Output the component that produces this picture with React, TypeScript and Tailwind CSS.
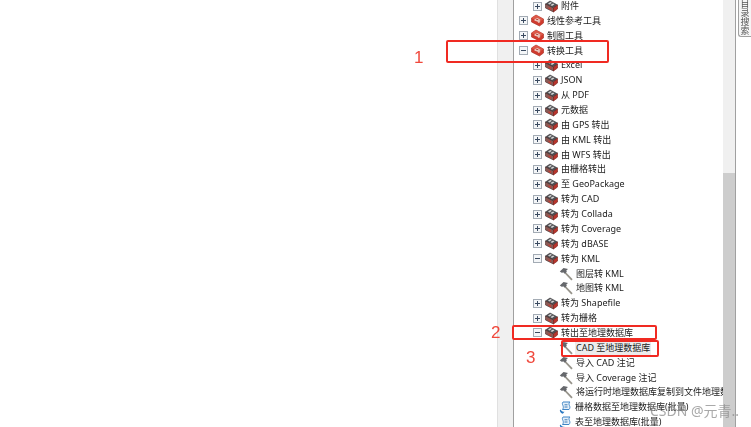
type Row = { label: string; level: 0 | 1 | 2; kind: "red" | "box" | "hammer" | "script"; toggle?: "plus" | "minus"; selected?: boolean };

const rows: Row[] = [
  { label: "附件", level: 1, kind: "box", toggle: "plus" },
  { label: "线性参考工具", level: 0, kind: "red", toggle: "plus" },
  { label: "制图工具", level: 0, kind: "red", toggle: "plus" },
  { label: "转换工具", level: 0, kind: "red", toggle: "minus" },
  { label: "Excel", level: 1, kind: "box", toggle: "plus" },
  { label: "JSON", level: 1, kind: "box", toggle: "plus" },
  { label: "从 PDF", level: 1, kind: "box", toggle: "plus" },
  { label: "元数据", level: 1, kind: "box", toggle: "plus" },
  { label: "由 GPS 转出", level: 1, kind: "box", toggle: "plus" },
  { label: "由 KML 转出", level: 1, kind: "box", toggle: "plus" },
  { label: "由 WFS 转出", level: 1, kind: "box", toggle: "plus" },
  { label: "由栅格转出", level: 1, kind: "box", toggle: "plus" },
  { label: "至 GeoPackage", level: 1, kind: "box", toggle: "plus" },
  { label: "转为 CAD", level: 1, kind: "box", toggle: "plus" },
  { label: "转为 Collada", level: 1, kind: "box", toggle: "plus" },
  { label: "转为 Coverage", level: 1, kind: "box", toggle: "plus" },
  { label: "转为 dBASE", level: 1, kind: "box", toggle: "plus" },
  { label: "转为 KML", level: 1, kind: "box", toggle: "minus" },
  { label: "图层转 KML", level: 2, kind: "hammer" },
  { label: "地图转 KML", level: 2, kind: "hammer" },
  { label: "转为 Shapefile", level: 1, kind: "box", toggle: "plus" },
  { label: "转为栅格", level: 1, kind: "box", toggle: "plus" },
  { label: "转出至地理数据库", level: 1, kind: "box", toggle: "minus" },
  { label: "CAD 至地理数据库", level: 2, kind: "hammer", selected: true },
  { label: "导入 CAD 注记", level: 2, kind: "hammer" },
  { label: "导入 Coverage 注记", level: 2, kind: "hammer" },
  { label: "将运行时地理数据库复制到文件地理数据库", level: 2, kind: "hammer" },
  { label: "栅格数据至地理数据库(批量)", level: 2, kind: "script" },
  { label: "表至地理数据库(批量)", level: 2, kind: "script" },
];

function Toggle({ type }: { type: "plus" | "minus" }) {
  return (
    <svg width="9" height="9" viewBox="0 0 9 9" className="shrink-0">
      <rect x="0.5" y="0.5" width="8" height="8" fill="#f4f6f8" stroke="#a3abb4" />
      <path d="M2 4.5h5" stroke="#3a4a60" />
      {type === "plus" && <path d="M4.5 2v5" stroke="#3a4a60" />}
    </svg>
  );
}

function Toolbox({ red }: { red: boolean }) {
  if (red) {
    return (
      <svg width="13" height="13" viewBox="0 0 13 13" className="block shrink-0">
        <path d="M.5 4 5 1l7.500 4v4L8.500 12 .5 8z" fill="#cf3a2d" stroke="#a32a20" strokeWidth="0.6" />
        <path d="M.5 4 5 1l7.500 4-4 3z" fill="#dc5a4a" />
        <path d="M3.500 5.200 6.500 4l3 1.800-1 1.200 1 1-2 1-1.200-1.500-2.800-.8z" fill="#e9c4bb" />
        <path d="M5.200 5.500h2" stroke="#b3362a" strokeWidth="0.9" />
      </svg>
    );
  }
  return (
    <svg width="13" height="13" viewBox="0 0 13 13" className="block shrink-0">
      <path d="M.5 4 5 1l7.500 4-4 3z" fill="#4f4f53" stroke="#38383b" strokeWidth="0.6" />
      <path d="M3 3.500 5.500 2l1.500.8L4.500 4.400zM5.500 5 8 3.500l1.500.8L7 5.900z" fill="#d2d2d2" />
      <path d="M.5 4l8 4v4l-8-4z" fill="#8a5a55" stroke="#4a2a28" strokeWidth="0.6" />
      <path d="M8.500 8l4-3v4l-4 3z" fill="#b9342c" stroke="#7a1e18" strokeWidth="0.6" />
      <path d="M3.500 7.200 6 8.500v1.600L3.500 8.800z" fill="#c83c32" />
    </svg>
  );
}

function Hammer() {
  return (
    <svg width="14" height="14" viewBox="0 0 14 14" className="block shrink-0">
      <path d="M5.500 5 13 12.800" stroke="#96938a" strokeWidth="1.800" />
      <path d="M.8 4.500 4.500 1 9 2 7.300 3.500 7.800 4.700 5.800 6.800 4.600 5.500 2.700 5.800z" fill="#66686c" />
    </svg>
  );
}

function ScriptIcon() {
  return (
    <svg width="13" height="13" viewBox="0 0 13 13" className="block shrink-0">
      <path d="M4 1h7c-1.200 1-1.200 2.200-.6 3.400.7 1.400.7 2.800-.4 4.100H3.500c1-1.300 1-2.700.4-4.100C3.300 3.200 3 2 4 1z" fill="#e4eff9" stroke="#3f85c6" strokeWidth="1" />
      <path d="M1.500 8.500c.8 1.800 2.200 2.300 4 2.300L3.800 12.800C2 12.500 1 11 .8 9.300z" fill="#2a79c2" />
      <path d="M5.500 3.800h3M5.500 6h3" stroke="#2f6fae" strokeWidth="0.9" />
    </svg>
  );
}

const indent = { 0: "pl-[5px]", 1: "pl-[19px]", 2: "pl-[45px]" };

function TreeRow({ row }: { row: Row }) {
  return (
    <div className={`flex h-[14.87px] items-center whitespace-nowrap ${indent[row.level]}`}>
      {row.toggle && <Toggle type={row.toggle} />}
      <span className={row.toggle ? "ml-[3px]" : ""}>
        {row.kind === "red" && <Toolbox red />}
        {row.kind === "box" && <Toolbox red={false} />}
        {row.kind === "hammer" && <Hammer />}
        {row.kind === "script" && <ScriptIcon />}
      </span>
      <span className={`ml-[2px] px-px leading-[14px] ${row.selected ? "bg-[#ececec]" : ""}`}>{row.label}</span>
    </div>
  );
}

export default function App() {
  return (
    <div className="relative flex h-[427px] w-[751px] overflow-hidden bg-white font-['Noto_Sans','Noto_Sans_CJK_SC',sans-serif] text-[9px] text-[#222]">
      <div className="w-[497px] shrink-0" />
      <div className="w-[16px] shrink-0 border-l border-[#e0e0e0] bg-[#f0f0f0]" />
      <div className="w-[210px] shrink-0 overflow-hidden border-l border-[#a0a0a0] bg-white">
        <div className="-mt-[1.4px] blur-[0.35px]">
          {rows.map((row) => (
            <TreeRow key={row.label} row={row} />
          ))}
        </div>
      </div>
      <div className="flex w-[12px] shrink-0 flex-col bg-[#f0f0f0]">
        <div className="h-[173px]" />
        <div className="flex-1 bg-[#cdcdcd]" />
      </div>
      <div className="w-[1px] shrink-0 bg-[#a0a0a0]" />
      <div className="ml-[2px] flex-1">
        <div className="flex h-[37px] flex-col items-center justify-end overflow-hidden rounded-bl-[3px] border-b border-l border-[#a0a0a0] bg-[#f5f5f5] pb-[1px] text-[9px] leading-[9px] text-[#555] blur-[0.4px]">
          <span className="shrink-0">目</span>
          <span className="shrink-0">录</span>
          <span className="shrink-0">搜</span>
          <span className="shrink-0">索</span>
        </div>
      </div>

      <div className="absolute left-[446px] top-[40px] h-[23px] w-[163px] rounded-[2px] border-2 border-[#f02a22]" />
      <div className="absolute left-[512px] top-[325px] h-[15px] w-[145px] rounded-[2px] border-2 border-[#f02a22]" />
      <div className="absolute left-[561px] top-[340px] h-[17px] w-[98px] rounded-[2px] border-2 border-[#f02a22]" />

      <span className="absolute left-[414px] top-[48px] font-['Liberation_Sans',sans-serif] text-[17px] leading-[20px] text-[#f0483c]">1</span>
      <span className="absolute left-[491px] top-[323px] font-['Liberation_Sans',sans-serif] text-[17px] leading-[20px] text-[#f0483c]">2</span>
      <span className="absolute left-[526px] top-[348px] font-['Liberation_Sans',sans-serif] text-[17px] leading-[20px] text-[#f0483c]">3</span>

      <span className="absolute left-[650px] top-[402px] text-[14px] leading-[18px] text-[#8c8c8c]/75">CSDN @元青..</span>
    </div>
  );
}
